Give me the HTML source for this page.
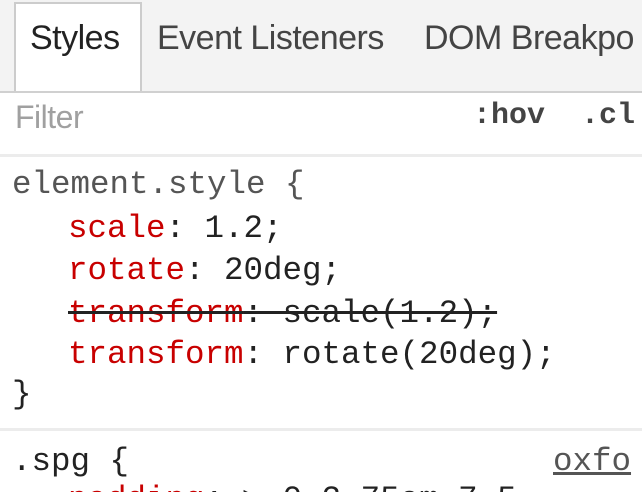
<!DOCTYPE html>
<html style="overflow:hidden;width:642px;height:492px"><head><style>
body{margin:0;width:642px;height:492px;overflow:hidden;background:#fff;position:relative;font-family:"Liberation Sans",sans-serif}
.tabs{position:absolute;left:0;top:0;width:642px;height:91px;background:#f3f3f3;border-bottom:2px solid #d0d0d0;overflow:hidden}
.tab{position:absolute;top:19px;font-size:34px;color:#333;white-space:nowrap;letter-spacing:-0.5px}
.sel{position:absolute;left:14px;top:2px;width:128px;height:90px;background:#fff;border:2px solid #ccc;border-bottom:none;box-sizing:border-box}
.filter{position:absolute;left:15px;top:99px;font-size:32px;color:#a0a0a0;letter-spacing:-0.5px}
.mono{font-family:"Liberation Mono","DejaVu Sans Mono",monospace;font-size:32.5px;white-space:pre;position:absolute;color:#222}
.sep{position:absolute;left:0;width:642px;height:3px;background:#ececec}
.r{color:#c80000}
</style></head><body>
<div class="tabs"><div class="sel"></div>
<div class="tab" style="left:30px;color:#222">Styles</div>
<div class="tab" style="left:157px;color:#444">Event Listeners</div>
<div class="tab" style="left:424px;color:#444">DOM Breakpo</div></div>
<div class="filter">Filter</div>
<div class="mono" style="left:473px;top:99px;font-weight:bold;color:#444;font-size:30px">:hov  .cl</div>
<div class="sep" style="top:154px"></div>
<div class="mono" style="left:12px;top:166px;color:#555">element.style {</div>
<div class="mono" style="left:68px;top:210px"><span class="r">scale</span>: 1.2;</div>
<div class="mono" style="left:68px;top:252px"><span class="r">rotate</span>: 20deg;</div>
<div class="mono" style="left:68px;top:295px;text-decoration:line-through"><span class="r">transform</span>: scale(1.2);</div>
<div class="mono" style="left:68px;top:336px"><span class="r">transform</span>: rotate(20deg);</div>
<div class="mono" style="left:12px;top:376px">}</div>
<div class="sep" style="top:428px"></div>
<div class="mono" style="left:12px;top:443px">.spg {</div>
<div class="mono" style="left:553px;top:443px;color:#555;text-decoration:underline">oxfo</div>
<div class="mono" style="left:68px;top:478px"><span class="r">padding</span>: ▶ 0.3.75em 7.5</div>
</body></html>
